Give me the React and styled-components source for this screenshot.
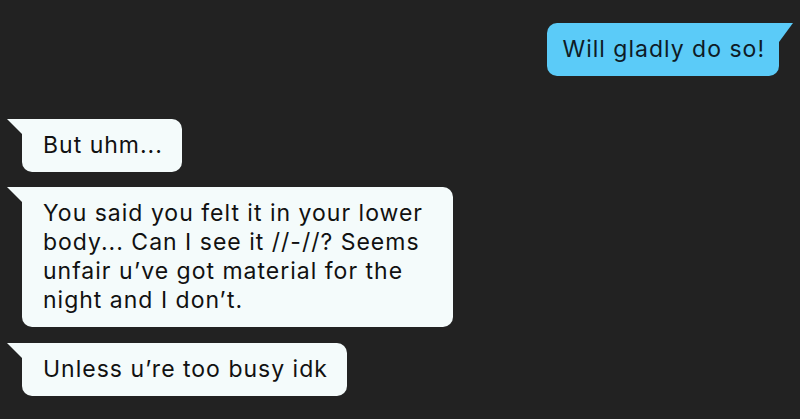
import styled, { createGlobalStyle } from "styled-components";

const messages = [
  { id: 1, mine: true, gap: 0, lines: ["Will gladly do so!"] },
  { id: 2, mine: false, gap: 43, lines: ["But uhm..."] },
  {
    id: 3,
    mine: false,
    gap: 15,
    width: 431,
    lines: [
      "You said you felt it in your lower",
      "body... Can I see it //-//? Seems",
      "unfair u\u2019ve got material for the",
      "night and I don\u2019t.",
    ],
  },
  { id: 4, mine: false, gap: 16, lines: ["Unless u\u2019re too busy idk"] },
];

const GlobalStyle = createGlobalStyle`
  html, body {
    margin: 0;
    background: #222222;
  }
  body {
    font-family: Inter, "Noto Sans", sans-serif;
  }
`;

const Thread = styled.div`
  width: 800px;
  height: 419px;
  box-sizing: border-box;
  padding: 23px 21px 0 22px;
  display: flex;
  flex-direction: column;
  overflow: hidden;
`;

const Row = styled.div`
  display: flex;
  justify-content: ${(p) => (p.$mine ? "flex-end" : "flex-start")};
  margin-top: ${(p) => p.$gap}px;
`;

const Bubble = styled.div`
  position: relative;
  box-sizing: border-box;
  width: ${(p) => (p.$width ? `${p.$width}px` : "auto")};
  padding: ${(p) => (p.$mine ? "12px 14px 12px 16px" : "12px 19px 12px 21px")};
  font-size: 23px;
  line-height: 29px;
  letter-spacing: 1px;
  border-radius: 10px;
  background: ${(p) => (p.$mine ? "#5bcbf8" : "#f4fbfb")};
  color: ${(p) => (p.$mine ? "#0e1b26" : "#111111")};
  ${(p) => (p.$mine ? "border-top-right-radius: 0;" : "border-top-left-radius: 0;")}

  /* little pointed tail on the top corner */
  &::before {
    content: "";
    position: absolute;
    top: 0;
    ${(p) => (p.$mine ? "right: -14px;" : "left: -15px;")}
    width: ${(p) => (p.$mine ? 14 : 15)}px;
    height: ${(p) => (p.$mine ? 19 : 15)}px;
    background: inherit;
    clip-path: ${(p) =>
      p.$mine
        ? "polygon(0 0, 100% 0, 0 100%)"
        : "polygon(0 0, 100% 0, 100% 100%)"};
  }
`;

export default function App() {
  return (
    <>
      <GlobalStyle />
      <Thread>
        {messages.map((m) => (
          <Row key={m.id} $mine={m.mine} $gap={m.gap}>
            <Bubble $mine={m.mine} $width={m.width}>
              {m.lines.map((line, i) => (
                <span key={i}>
                  {line}
                  {i < m.lines.length - 1 && <br />}
                </span>
              ))}
            </Bubble>
          </Row>
        ))}
      </Thread>
    </>
  );
}
